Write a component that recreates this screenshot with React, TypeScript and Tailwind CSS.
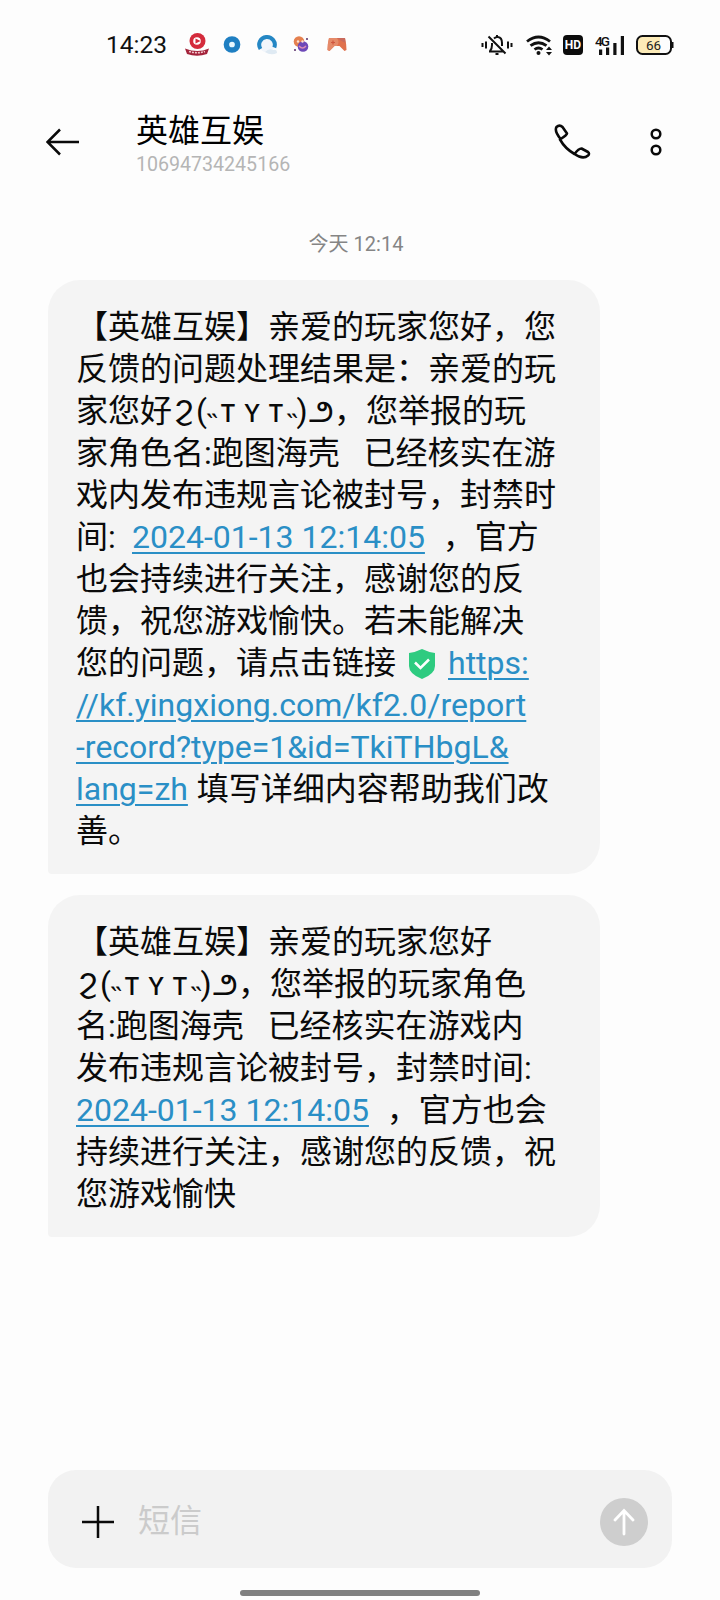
import type { ReactNode } from 'react'

function AppIcons() {
  return (
    <div className="flex items-center">
      <svg width="26" height="26" viewBox="0 0 26 26" className="ml-[17px]">
        <circle cx="13.5" cy="9" r="8" fill="#d42b3c" />
        <circle cx="13" cy="9" r="3.800" fill="#fff" />
        <path d="M11.500 6.500l5 2.500-5 2.500z" fill="#d42b3c" />
        <path d="M1 16.500q12.500 5 24 0l-2 5.500q-10 3.500-20 0z" fill="#a3233b" />
        <path d="M5 19.500q8 2.500 16 0" fill="none" stroke="#f3c6cc" strokeWidth="1.600" strokeDasharray="2 1" />
      </svg>
      <svg width="18" height="26" viewBox="0 0 18 26" className="ml-[13px]">
        <circle cx="9" cy="12.500" r="5.600" fill="#e8f8ff" stroke="#1f7fc2" strokeWidth="5.500" />
      </svg>
      <svg width="24" height="26" viewBox="0 0 24 26" className="ml-[15px]">
        <circle cx="11" cy="13" r="7.500" fill="#f2f6fb" />
        <path d="M4.500 17A7.800 7.800 0 1 1 18.300 15.500" fill="none" stroke="#2587c4" strokeWidth="4" />
        <path d="M9 20q4-4 8-2q4-1 4 3q-6 3-12-1z" fill="#dfeaf3" />
      </svg>
      <svg width="16" height="26" viewBox="0 0 16 26" className="ml-[13px]">
        <circle cx="6" cy="9.500" r="5.300" fill="#e5804f" />
        <circle cx="10" cy="14.500" r="5.300" fill="#6d49b8" />
        <circle cx="5" cy="9.500" r="1.200" fill="#fbe0d2" />
        <circle cx="9.500" cy="9.500" r="1.200" fill="#fbe0d2" />
        <path d="M6 14q3.500 4 7 0" fill="none" stroke="#d98bb5" strokeWidth="1.500" />
        <path d="M1 17h2v2h-2zM13 6h2v2h-2z" fill="#80608c" />
      </svg>
      <svg width="20" height="26" viewBox="0 0 20 26" className="ml-[18px]">
        <path d="M2 6h16q1.500 6 1.500 12l-2 1-5-5h-5l-5 5-2-1q0-6 1.500-12z" fill="#e0714d" />
        <path d="M2 6h8q3 4 0 8h-2.500l-5 5-2-1q0-6 1.500-12z" fill="#e58a69" />
        <path d="M10 6h8l.5 5-4-2z" fill="#c96a5c" />
        <path d="M6 8.500v4M4 10.500h4" stroke="#cf563e" strokeWidth="1.200" />
      </svg>
    </div>
  )
}

function StatusIcons() {
  return (
    <div className="flex items-center">
      <svg width="32" height="24" viewBox="0 0 32 24" fill="none" stroke="#111" strokeWidth="2">
        <path d="M8 18.500h14M9 18q2-2 2-6v-2M13 5.500q2-2 4-1.500q4 .6 4 6v3M16 2v2M7.500 3.500l17 17" />
        <path d="M14.500 21h3" />
        <path d="M1.500 10v4M5 8.500v7M27 8.500v7M30.500 10v4" />
      </svg>
      <svg width="27" height="24" viewBox="0 0 27 24" fill="none" stroke="#111" strokeWidth="2.800" className="ml-[13px]">
        <path d="M1 8.500q11.500-9 23 0M4.500 12.700q8-6 16 0M8.500 16.500q4-3 8 0" />
        <circle cx="12.500" cy="20" r="2" fill="#111" stroke="none" />
        <path d="M20 17l3-3.500 3 3.500zM20 19l3 3.500 3-3.500z" fill="#111" stroke="none" />
      </svg>
      <span className="ml-[10px] flex h-[20px] w-[20px] items-center justify-center rounded-[4px] bg-[#0c0c0c] text-[12px] leading-none font-bold text-white">
        HD
      </span>
      <svg width="30" height="24" viewBox="0 0 30 24" className="ml-[12px]" fill="#111">
        <text x="0" y="12.500" fontSize="13.500" fontWeight="500" fontFamily="Roboto, sans-serif" textLength="15">
          4G
        </text>
        <path d="M4 16.500h3.200v5.500H4zM11 14.500h3.200V22H11zM18.300 10h3.200v12h-3.200zM25.800 3H29v19h-3.200z" />
      </svg>
      <svg width="38" height="24" viewBox="0 0 38 24" className="ml-[11px]">
        <rect x="1" y="3" width="34" height="18" rx="5.500" fill="#fdfdfd" />
        <path d="M6.500 3H24v18H6.500Q1 21 1 15.500v-7Q1 3 6.500 3z" fill="#fcebb8" />
        <rect x="1" y="3" width="34" height="18" rx="5.500" fill="none" stroke="#111" strokeWidth="2" />
        <path d="M36 9h1.500v6H36z" fill="#111" />
        <text x="17.500" y="16.800" fontSize="13.500" fontFamily="Roboto, sans-serif" textAnchor="middle" fill="#222">
          66
        </text>
      </svg>
    </div>
  )
}

// every row of a message is one 42px text line
function Line({ children }: { children: ReactNode }) {
  return <div className="h-[42px] leading-[42px] whitespace-pre">{children}</div>
}

function Link({ children }: { children: ReactNode }) {
  return (
    <a className="text-[#2a8fc6] underline decoration-2 underline-offset-[4px]" href="#">
      {children}
    </a>
  )
}

function Kaomoji() {
  return (
    <span className="inline-flex h-[42px] w-[162px] text-center align-top font-['Roboto','Noto_Sans','DejaVu_Sans',sans-serif]">
      <span className="w-[24px] text-[27px]">Ϩ</span>
      <span className="w-[10px]">(</span>
      <span className="w-[12px] translate-y-[6px] text-[28px]">˵</span>
      <span className="w-[20px]">ᴛ</span>
      <span className="w-[28px]">ʏ</span>
      <span className="w-[20px]">ᴛ</span>
      <span className="w-[10px] translate-y-[6px] text-[28px]">˵</span>
      <span className="w-[12px]">)</span>
      <span className="w-[26px]">౨</span>
    </span>
  )
}

function Shield() {
  return (
    <svg width="28" height="32" viewBox="0 0 28 32" className="mr-[12px] ml-[12px] inline-block align-[-6px]">
      <path d="M14 1q6 3 13 4v13q0 8-13 13Q1 26 1 18V5q7-1 13-4z" fill="#2ecb80" />
      <path d="M7 14.500l5.500 5.500L21 11.500" fill="none" stroke="#fff" strokeWidth="2.500" />
    </svg>
  )
}

function Bubble({ children }: { children: ReactNode }) {
  return (
    <div className="w-[552px] rounded-[32px] rounded-bl-[4px] bg-[#f4f4f4] px-[28px] pt-[26px] pb-[22px] text-[32px] text-[#0a0a0a]">
      {children}
    </div>
  )
}

export default function App() {
  return (
    <div className="flex h-[1600px] w-[720px] flex-col bg-[#fdfdfd] font-['Roboto','Noto_Sans_CJK_SC',sans-serif]">
      <div className="flex h-[90px] items-center justify-between pr-[46px] pl-[106px]">
        <div className="flex items-center">
          <span className="w-[61px] text-[24.5px] text-[#111]">14:23</span>
          <AppIcons />
        </div>
        <StatusIcons />
      </div>

      <header className="flex h-[104px] items-center pl-[46px]">
        <svg width="34" height="28" viewBox="0 0 34 28" fill="none" stroke="#0a0a0a" strokeWidth="2.500">
          <path d="M33 14H2M14 1.500L1.500 14 14 26.500" />
        </svg>
        <div className="mt-[3px] ml-[56px]">
          <h1 className="h-[42px] text-[32px] leading-[42px] text-black">英雄互娱</h1>
          <p className="h-[26px] text-[19.6px] leading-[26px] text-[#b5b5b5]">10694734245166</p>
        </div>
        <svg width="38" height="38" viewBox="0 0 38 38" className="ml-auto" fill="none" stroke="#0a0a0a" strokeWidth="2.600" strokeLinejoin="round">
          <path d="M8 16.500Q1 8 3.500 4q3-3 6 0l4.500 6.500q0 1.500-7 6Q12 25.500 21.500 31q4-5.500 7-5.500l6.500 3.500q2 1.500 0 3.500-5 4.500-13.500-1.500" />
        </svg>
        <svg width="14" height="30" viewBox="0 0 14 30" className="mr-[57px] ml-[58px]" fill="none" stroke="#0a0a0a" strokeWidth="2.500">
          <circle cx="7" cy="7" r="4.300" />
          <circle cx="7" cy="23" r="4.300" />
        </svg>
      </header>

      <main className="flex flex-1 flex-col pl-[48px]">
        <p className="mt-[34px] mb-[22px] h-[30px] pr-[56px] text-center text-[20px] leading-[32px] text-[#858585]">今天 12:14</p>
        <Bubble>
          <Line>【英雄互娱】亲爱的玩家您好，您</Line>
          <Line>反馈的问题处理结果是：亲爱的玩</Line>
          <Line>
            家您好
            <Kaomoji />
            ，您举报的玩
          </Line>
          <Line>家角色名:跑图海壳{'   '}已经核实在游</Line>
          <Line>戏内发布违规言论被封号，封禁时</Line>
          <Line>
            间<span className="inline-block w-[24px]">:</span>
            <Link>2024-01-13 12:14:05</Link>
            <span className="tracking-[1px]">{'  '}</span>，官方
          </Line>
          <Line>也会持续进行关注，感谢您的反</Line>
          <Line>馈，祝您游戏愉快。若未能解决</Line>
          <Line>
            您的问题，请点击链接
            <Shield />
            <Link>https:</Link>
          </Line>
          <Line>
            <Link>//kf.yingxiong.com/kf2.0/report</Link>
          </Line>
          <Line>
            <Link>-record?type=1&amp;id=TkiTHbgL&amp;</Link>
          </Line>
          <Line>
            <Link>lang=zh</Link>
            <span className="tracking-[1px]"> </span>填写详细内容帮助我们改
          </Line>
          <Line>善。</Line>
        </Bubble>
        <div className="h-[21px]" />
        <Bubble>
          <Line>【英雄互娱】亲爱的玩家您好</Line>
          <Line>
            <Kaomoji />
            ，您举报的玩家角色
          </Line>
          <Line>名:跑图海壳{'   '}已经核实在游戏内</Line>
          <Line>发布违规言论被封号，封禁时间:</Line>
          <Line>
            <Link>2024-01-13 12:14:05</Link>
            <span className="tracking-[1px]">{'  '}</span>，官方也会
          </Line>
          <Line>持续进行关注，感谢您的反馈，祝</Line>
          <Line>您游戏愉快</Line>
        </Bubble>
      </main>

      <footer className="flex flex-col items-center">
        <div className="flex h-[98px] w-[624px] items-center rounded-[28px] bg-[#f2f2f2] pr-[24px] pl-[34px]">
          <svg width="32" height="32" viewBox="0 0 32 32" className="mt-[6px]" stroke="#0a0a0a" strokeWidth="2.500">
            <path d="M0 16h32M16 0v32" />
          </svg>
          <span className="mt-[3px] ml-[24px] flex-1 text-[32px] leading-none text-[#cbcbcb]">短信</span>
          <span className="mt-[6px] flex h-[48px] w-[48px] items-center justify-center rounded-full bg-[#cecece]">
            <svg width="22" height="28" viewBox="0 0 22 28" fill="none" stroke="#fff" strokeWidth="2.800" strokeLinecap="round">
              <path d="M11 26V3M2 12l9-9.500L20 12" />
            </svg>
          </span>
        </div>
        <div className="mt-[22px] mb-[4px] h-[6px] w-[240px] rounded-full bg-[#808080]" />
      </footer>
    </div>
  )
}
